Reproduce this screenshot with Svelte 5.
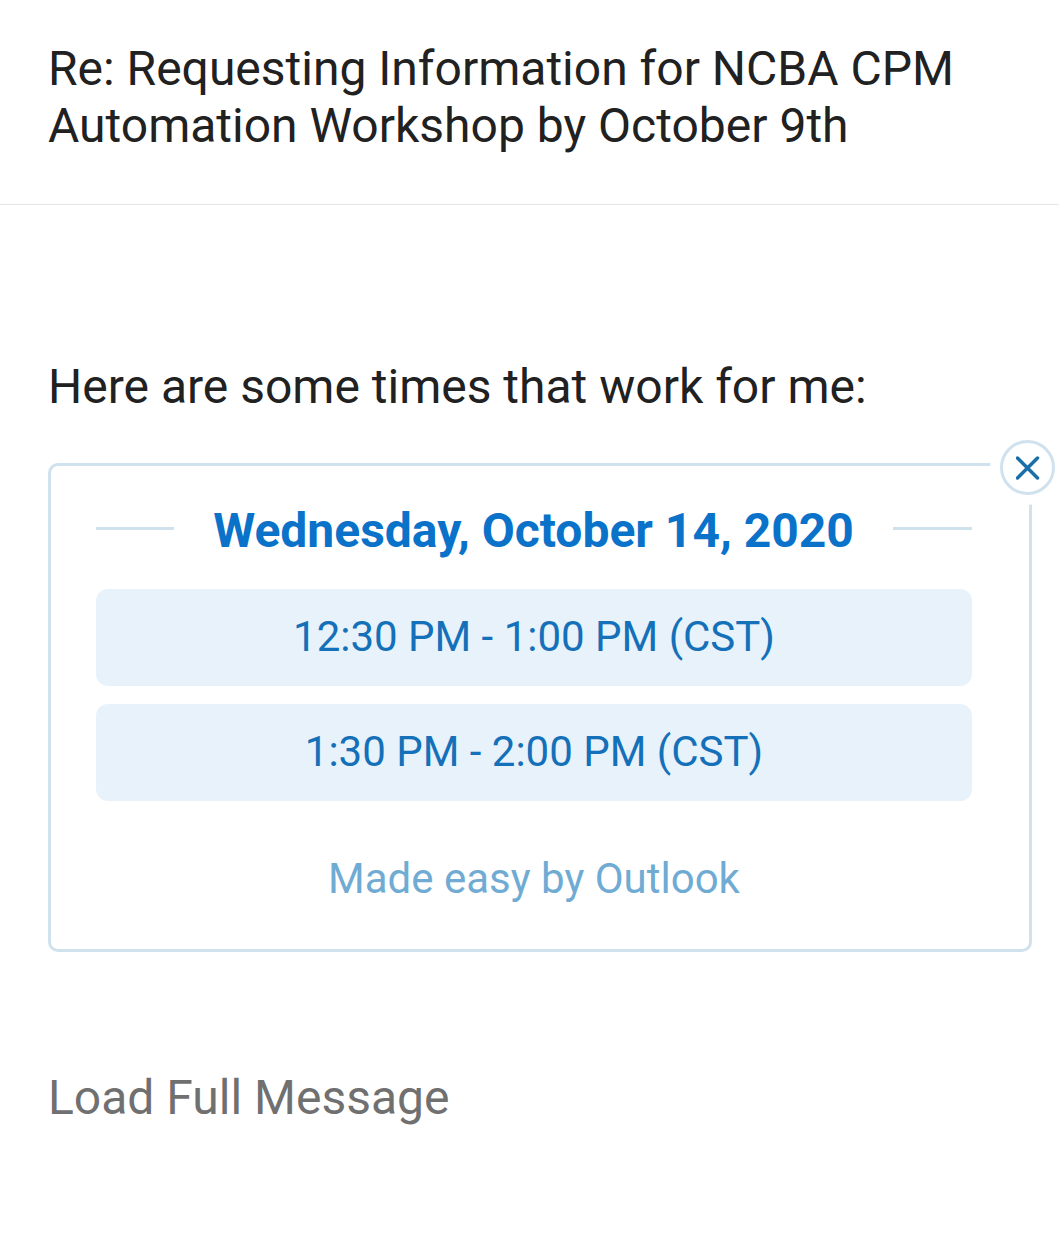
<script lang="ts">
	const day = 'Wednesday, October 14, 2020';
	const slots = ['12:30 PM - 1:00 PM (CST)', '1:30 PM - 2:00 PM (CST)'];
</script>

<div class="page">
	<header class="subject">
		<h1>Re: Requesting Information for NCBA CPM Automation Workshop by October 9th</h1>
	</header>

	<main class="body">
		<p class="intro">Here are some times that work for me:</p>

		<section class="card">
			<button class="close" aria-label="Remove">
				<svg viewBox="0 0 24 24" width="24" height="24">
					<path d="M1.5 2 21.5 22M21.5 2 1.5 22" />
				</svg>
			</button>

			<div class="day">
				<span class="rule"></span>
				<h2>{day}</h2>
				<span class="rule"></span>
			</div>

			<div class="slots">
				{#each slots as slot}
					<div class="slot">{slot}</div>
				{/each}
			</div>

			<div class="made">Made easy by Outlook</div>
		</section>

		<div class="load">Load Full Message</div>
	</main>
</div>

<style>
	:global(body) {
		background: #fff;
	}

	.page {
		width: 1059px;
		height: 1247px;
		overflow: hidden;
		font-family: Roboto, 'Liberation Sans', sans-serif;
		color: #212121;
	}

	.subject {
		padding: 40px 48px 50px;
		border-bottom: 1px solid #e6e6e6;
	}

	h1 {
		margin: 0;
		font-size: 48px;
		font-weight: 400;
		line-height: 57px;
		color: #212121;
	}

	.body {
		padding: 0 27px 0 48px;
	}

	.intro {
		margin: 152px 0 0;
		font-size: 48px;
		line-height: 60px;
	}

	.card {
		position: relative;
		box-sizing: border-box;
		width: 984px;
		height: 489px;
		margin-top: 46px;
		padding: 36px 57px 0 45px;
		border: 3px solid #d0e2ed;
		border-radius: 10px;
	}

	.close {
		position: absolute;
		top: -26px;
		right: -26px;
		box-sizing: border-box;
		display: flex;
		align-items: center;
		justify-content: center;
		width: 55px;
		height: 55px;
		padding: 0;
		background: #fff;
		border: 3px solid #d0e2ed;
		border-radius: 50%;
		box-shadow: 0 0 0 10px #fff;
	}

	.close svg {
		fill: none;
		stroke: #1a6fa8;
		stroke-width: 3.5;
		stroke-linecap: round;
	}

	.day {
		display: flex;
		align-items: center;
		justify-content: space-between;
		height: 57px;
	}

	.rule {
		width: 78px;
		height: 3px;
		margin-bottom: 4px;
		background: #cfe1ec;
	}

	.rule:last-child {
		width: 79px;
	}

	h2 {
		margin: 0;
		font-size: 48px;
		font-weight: 700;
		line-height: 58px;
		color: #0a72c9;
	}

	.slots {
		display: flex;
		flex-direction: column;
		gap: 18px;
		margin-top: 30px;
	}

	.slot {
		height: 97px;
		line-height: 96px;
		text-align: center;
		font-size: 42px;
		color: #1470b8;
		background: #e7f2fb;
		border-radius: 12px;
	}

	.made {
		margin-top: 49px;
		text-align: center;
		font-size: 42px;
		line-height: 58px;
		color: #6fabd3;
	}

	.load {
		margin: 116px 0 0;
		font-size: 48px;
		line-height: 60px;
		color: #707070;
	}
</style>
